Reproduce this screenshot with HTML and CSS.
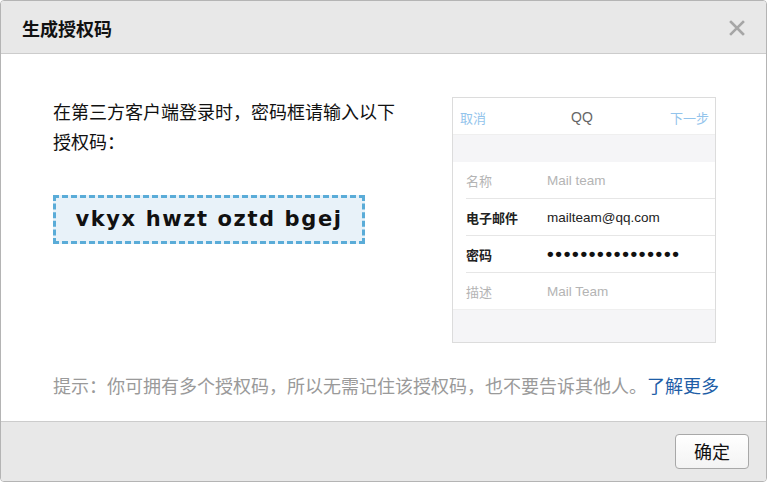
FILE: index.html
```html
<!DOCTYPE html>
<html lang="zh-CN">
<head>
<meta charset="utf-8">
<title>生成授权码</title>
<link rel="stylesheet" href="styles.css">
</head>
<body>
<div class="dialog">
  <div class="header">
    <div class="title">生成授权码</div>
    <svg class="close" width="16" height="16" viewBox="0 0 16 16"><path d="M2 2 L14 14 M14 2 L2 14" stroke="#a6a6a6" stroke-width="2.6" stroke-linecap="square"/></svg>
  </div>
  <div class="body">
    <div class="row">
      <div class="left">
        <p class="intro">在第三方客户端登录时，密码框请输入以下授权码：</p>
        <div class="code">vkyx hwzt oztd bgej</div>
      </div>
      <div class="phone">
        <div class="nav">
          <span class="nav-link">取消</span>
          <span class="nav-title">QQ</span>
          <span class="nav-link">下一步</span>
        </div>
        <div class="band"></div>
        <div class="form">
          <div class="frow muted"><span class="label">名称</span><span class="value">Mail team</span></div>
          <div class="frow strong"><span class="label">电子邮件</span><span class="value">mailteam@qq.com</span></div>
          <div class="frow strong"><span class="label">密码</span><span class="value dots">••••••••••••••••</span></div>
          <div class="frow muted last"><span class="label">描述</span><span class="value">Mail Team</span></div>
        </div>
        <div class="band bottom"></div>
      </div>
    </div>
    <p class="hint">提示：你可拥有多个授权码，所以无需记住该授权码，也不要告诉其他人。<a class="more" href="#">了解更多</a></p>
  </div>
  <div class="footer">
    <button class="ok">确定</button>
  </div>
</div>
</body>
</html>
```
FILE: styles.css
```css
* { box-sizing: border-box; }
html, body { margin: 0; padding: 0; background: #ffffff; }
body {
  font-family: "Noto Sans CJK SC", "Liberation Sans", sans-serif;
  width: 767px;
  height: 482px;
  overflow: hidden;
}
.dialog {
  width: 767px;
  height: 482px;
  border: 1px solid #b4b4b4;
  border-radius: 4px;
  display: flex;
  flex-direction: column;
  overflow: hidden;
  background: #fff;
}
.header {
  height: 53px;
  flex: none;
  background: #e8e8e8;
  border-bottom: 1px solid #cccccc;
  display: flex;
  align-items: center;
  justify-content: space-between;
  padding: 0 21px 0 21px;
}
.title {
  font-size: 18px;
  font-weight: 700;
  color: #111;
  line-height: 24px;
  padding-top: 1px;
}
.close { display: block; margin-top: 2px; }
.body {
  flex: 1;
  padding: 42px 0 0 52px;
}
.row {
  display: flex;
  align-items: flex-start;
}
.left {
  width: 350px;
  margin-right: 49px;
}
.intro {
  margin: 0;
  font-size: 18px;
  line-height: 30px;
  color: #111;
}
.code {
  margin-top: 39px;
  width: 312px;
  height: 49px;
  border: 3px dashed #5aacd8;
  background: #e8f2f9;
  font-family: "DejaVu Sans", "Liberation Sans", sans-serif;
  font-weight: 700;
  font-size: 21px;
  letter-spacing: 1.6px;
  color: #111;
  display: flex;
  align-items: center;
  justify-content: center;
  padding-bottom: 1px;
}
.phone {
  margin-top: 1px;
  width: 264px;
  height: 246px;
  border: 1px solid #dcdcdc;
  display: flex;
  flex-direction: column;
  background: #fff;
  font-family: "Noto Sans CJK SC", "Liberation Sans", sans-serif;
  font-size: 13px;
}
.nav {
  height: 37px;
  flex: none;
  display: flex;
  align-items: center;
  justify-content: space-between;
  padding: 2px 6px 0 7px;
  border-bottom: 1px solid #efefef;
}
.nav-link { color: #93c4ec; }
.nav-title { color: #666; font-family: "Liberation Sans", sans-serif; font-size: 14px; margin-left: 8px; }
.band {
  height: 27px;
  flex: none;
  background: #f5f5f7;
}
.band.bottom { flex: 1; border-top: 1px solid #efefef; }
.form { padding-left: 13px; }
.frow {
  height: 37px;
  display: flex;
  align-items: center;
  border-bottom: 1px solid #e6e6e6;
}
.frow.last { border-bottom: none; height: 36px; }
.label { width: 81px; flex: none; }
.value { font-family: "Liberation Sans", sans-serif; font-size: 13.5px; }
.muted { color: #b4b4b4; }
.strong { color: #222; }
.strong .label { font-weight: 700; }
.dots { font-size: 19px; letter-spacing: 1.7px; font-weight: 700; color: #111; }
.hint {
  margin: 27px 0 0 0;
  font-size: 18px;
  line-height: 30px;
  color: #9a9a9a;
  white-space: nowrap;
}
.more { color: #1e5ea7; text-decoration: none; }
.footer {
  height: 60px;
  flex: none;
  background: #e8e8e8;
  border-top: 1px solid #cccccc;
  display: flex;
  justify-content: flex-end;
  align-items: flex-start;
  padding: 12px 17px 0 0;
}
.ok {
  width: 74px;
  height: 35px;
  border: 1px solid #a8a8a8;
  border-radius: 4px;
  background: linear-gradient(#ffffff, #f3f3f3);
  font-family: "Noto Sans CJK SC", sans-serif;
  font-size: 18px;
  color: #111;
  padding: 0;
  line-height: 33px;
}
```
